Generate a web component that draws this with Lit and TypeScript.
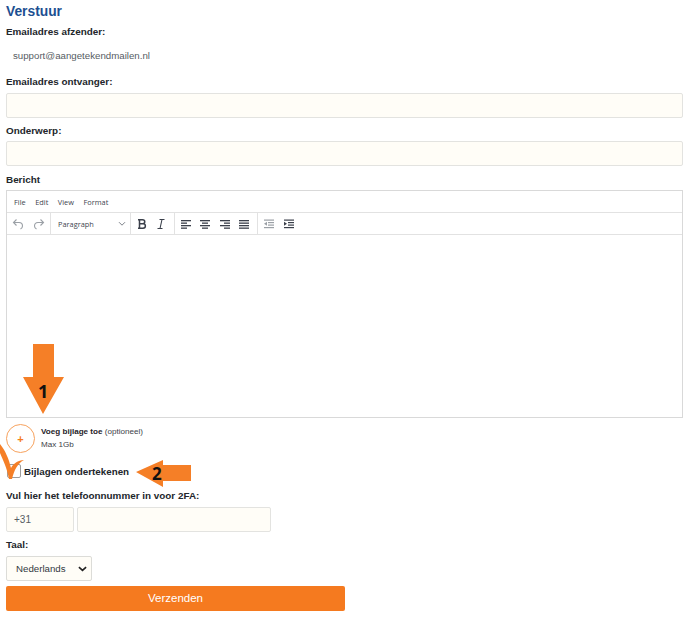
import { LitElement, html, css, svg } from "lit";
import { customElement } from "lit/decorators.js";

const lines = (rows: [number, number][], color: string) =>
  svg`${rows.map(([x, w], i) => svg`<rect x=${x} y=${2 + i * 2.5} width=${w} height="1.3" fill=${color}></rect>`)}`;

const alignIcon = (rows: [number, number][]) =>
  html`<svg class="ic" viewBox="0 0 12 12" width="12" height="12">${lines(rows, "#3a3f4a")}</svg>`;

const indentIcon = (indent: boolean, color: string) => html`<svg class="ic" viewBox="0 0 12 12" width="12" height="12">
  <rect x="1" y="1.5" width="10" height="1.2" fill=${color}></rect>
  <rect x="5" y="4" width="6" height="1.2" fill=${color}></rect>
  <rect x="5" y="6.5" width="6" height="1.2" fill=${color}></rect>
  <rect x="1" y="9" width="10" height="1.2" fill=${color}></rect>
  <path d=${indent ? "M1 3.8 L4 5.8 L1 7.8 Z" : "M4 3.8 L1 5.8 L4 7.8 Z"} fill=${color}></path>
</svg>`;

@customElement("app-root")
export class AppRoot extends LitElement {
  static styles = css`
    :host {
      display: block;
      position: relative;
      width: 688px;
      height: 620px;
      background: #fff;
      overflow: hidden;
      font-family: "Liberation Sans", Arial, sans-serif;
      color: #212529;
    }
    .page {
      display: flex;
      flex-direction: column;
      padding: 4px 5px 0 6px;
    }
    h1 {
      margin: 0;
      font-size: 13.8px;
      line-height: 16px;
      font-weight: 700;
      color: #1d4f91;
    }
    label {
      display: block;
      font-size: 9.9px;
      line-height: 12px;
      font-weight: 700;
      color: #22262b;
    }
    .l1 { margin-top: 6px; }
    .static {
      font-size: 9.7px;
      line-height: 12px;
      color: #565c63;
      padding-left: 7px;
      margin-top: 12px;
    }
    .l2 { margin-top: 14px; }
    .field {
      height: 25px;
      box-sizing: border-box;
      background: #fffdf7;
      border: 1px solid #e3e3e0;
      border-radius: 2px;
    }
    .f1 { margin-top: 5px; }
    .l3 { margin-top: 7px; }
    .f2 { margin-top: 4px; }
    .l4 { margin-top: 8px; }
    .editor {
      margin-top: 4px;
      height: 228px;
      box-sizing: border-box;
      border: 1px solid #d9d9d9;
      display: flex;
      flex-direction: column;
    }
    .menu {
      height: 21px;
      flex: none;
      display: flex;
      align-items: center;
      gap: 9.5px;
      padding-left: 7px;
      font-family: "Open Sans", "Liberation Sans", sans-serif;
      font-size: 7.4px;
      color: #3f4650;
      border-bottom: 1px solid #e2e2e2;
    }
    .tools {
      height: 21px;
      flex: none;
      display: flex;
      border-bottom: 1px solid #e2e2e2;
    }
    .group {
      display: flex;
      align-items: center;
      box-sizing: border-box;
      border-right: 1px solid #e2e2e2;
      height: 100%;
    }
    .g1 { width: 44px; padding-left: 5px; gap: 9px; }
    .g2 {
      width: 80px;
      padding-left: 7px;
      font-family: "Open Sans", "Liberation Sans", sans-serif;
      font-size: 7.4px;
      color: #3f4650;
      justify-content: space-between;
      padding-right: 4px;
    }
    .g3 { width: 44px; padding-left: 6px; gap: 9px; }
    .g4 { width: 83px; padding-left: 5px; gap: 7.3px; }
    .g5 { border: 0; padding-left: 5px; gap: 8px; }
    .ic { display: block; flex: none; }
    .body { flex: 1; }
    .attach {
      margin-top: 6px;
      display: flex;
      gap: 6px;
      align-items: center;
    }
    .circle {
      width: 29px;
      height: 29px;
      box-sizing: border-box;
      border: 1px solid #f7a25e;
      border-radius: 50%;
      display: flex;
      align-items: center;
      justify-content: center;
      color: #f57c20;
      font-size: 11px;
      font-weight: 700;
    }
    .a1 { font-size: 8.1px; line-height: 12px; color: #3d4249; }
    .a1 b { color: #1f2328; }
    .a2 { font-size: 8.1px; line-height: 12px; margin-top: 1px; color: #3d4249; }
    .sign {
      margin-top: 11px;
      margin-left: 1px;
      display: flex;
      align-items: center;
      gap: 3px;
      font-size: 9.8px;
      font-weight: 700;
      color: #22262b;
    }
    .box {
      width: 14px;
      height: 14px;
      box-sizing: border-box;
      border: 1px solid #9d9d9d;
      border-radius: 2px;
      background: #fff;
    }
    .l5 { margin-top: 12px; }
    .phone {
      margin-top: 5px;
      display: flex;
      gap: 3px;
    }
    .prefix {
      width: 68px;
      height: 25px;
      box-sizing: border-box;
      background: #fffdf7;
      border: 1px solid #e3e3e0;
      border-radius: 2px;
      font-size: 10px;
      line-height: 23px;
      padding-left: 7px;
      color: #565c63;
    }
    .num {
      width: 194px;
      height: 25px;
      box-sizing: border-box;
      background: #fffdf7;
      border: 1px solid #e3e3e0;
      border-radius: 2px;
    }
    .l6 { margin-top: 7px; }
    .select {
      margin-top: 5px;
      width: 86px;
      height: 25px;
      box-sizing: border-box;
      background: #fffdf7;
      border: 1px solid #dcdcd8;
      border-radius: 2px;
      display: flex;
      align-items: center;
      justify-content: space-between;
      padding: 0 4px 0 9px;
      font-size: 9.7px;
      color: #33383e;
    }
    .submit {
      margin-top: 5px;
      width: 339px;
      height: 25px;
      background: #f57a1f;
      border-radius: 2px;
      color: #fff;
      font-size: 11.5px;
      line-height: 24px;
      text-align: center;
    }
    .overlay {
      position: absolute;
      left: 0;
      top: 0;
      pointer-events: none;
    }
    .num-tag {
      position: absolute;
      font-family: "Open Sans", "Liberation Sans", sans-serif;
      font-weight: 700;
      color: #111;
      font-size: 18px;
      line-height: 20px;
    }
    .n1 { left: 38px; top: 381px; }
    .n2 { left: 152px; top: 464px; font-size: 17px; }
  `;

  render() {
    return html`
      <div class="page">
        <h1>Verstuur</h1>
        <label class="l1">Emailadres afzender:</label>
        <div class="static">support@aangetekendmailen.nl</div>
        <label class="l2">Emailadres ontvanger:</label>
        <div class="field f1"></div>
        <label class="l3">Onderwerp:</label>
        <div class="field f2"></div>
        <label class="l4">Bericht</label>
        <div class="editor">
          <div class="menu"><span>File</span><span>Edit</span><span>View</span><span>Format</span></div>
          <div class="tools">
            <div class="group g1">
              <svg class="ic" viewBox="0 0 12 12" width="12" height="12" fill="none" stroke="#9ba0a6" stroke-width="1.1">
                <path d="M4.5 1.5 L1.5 4.5 L4.5 7.5 M1.5 4.5 H7 C9.5 4.5 10.5 6.5 10.5 8 C10.5 9.5 9.5 10.5 8.5 11"></path>
              </svg>
              <svg class="ic" viewBox="0 0 12 12" width="12" height="12" fill="none" stroke="#9ba0a6" stroke-width="1.1">
                <path d="M7.5 1.5 L10.5 4.5 L7.5 7.5 M10.5 4.5 H5 C2.5 4.5 1.5 6.5 1.5 8 C1.5 9.5 2.5 10.5 3.5 11"></path>
              </svg>
            </div>
            <div class="group g2">
              <span>Paragraph</span>
              <svg class="ic" viewBox="0 0 8 6" width="8" height="6" fill="none" stroke="#7d8289" stroke-width="1">
                <path d="M1 1.2 L4 4.2 L7 1.2"></path>
              </svg>
            </div>
            <div class="group g3">
              <svg class="ic" viewBox="0 0 10 12" width="10" height="12" fill="none" stroke="#3a3f4a" stroke-width="1.5">
                <path d="M2.5 1.8 V10.2 M1 1.8 H5.5 C8.5 1.8 8.5 5.8 5.5 5.8 H2.5 M2.5 5.8 H6 C9.2 5.8 9.2 10.2 6 10.2 H1"></path>
              </svg>
              <svg class="ic" viewBox="0 0 10 12" width="10" height="12" fill="none" stroke="#3a3f4a" stroke-width="1.1">
                <path d="M3.5 1.5 H8.5 M1.5 10.5 H6.5 M6 1.5 L4 10.5"></path>
              </svg>
            </div>
            <div class="group g4">
              ${alignIcon([[1, 10], [1, 6], [1, 10], [1, 6]])}
              ${alignIcon([[1, 10], [3, 6], [1, 10], [3, 6]])}
              ${alignIcon([[1, 10], [5, 6], [1, 10], [5, 6]])}
              ${alignIcon([[1, 10], [1, 10], [1, 10], [1, 10]])}
            </div>
            <div class="group g5">
              ${indentIcon(false, "#9ba0a6")}
              ${indentIcon(true, "#3a3f4a")}
            </div>
          </div>
          <div class="body"></div>
        </div>
        <div class="attach">
          <div class="circle">+</div>
          <div>
            <div class="a1"><b>Voeg bijlage toe</b> (optioneel)</div>
            <div class="a2">Max 1Gb</div>
          </div>
        </div>
        <div class="sign"><div class="box"></div><span>Bijlagen ondertekenen</span></div>
        <label class="l5">Vul hier het telefoonnummer in voor 2FA:</label>
        <div class="phone"><div class="prefix">+31</div><div class="num"></div></div>
        <label class="l6">Taal:</label>
        <div class="select">
          <span>Nederlands</span>
          <svg class="ic" viewBox="0 0 10 6" width="9" height="6" fill="none" stroke="#222" stroke-width="1.8">
            <path d="M1 1 L5 4.6 L9 1"></path>
          </svg>
        </div>
        <div class="submit">Verzenden</div>
      </div>

      <svg class="overlay" width="688" height="620" viewBox="0 0 688 620">
        <path d="M33 344 H54 V377 H64 L43 414 L23 377 H33 Z" fill="#f57f27"></path>
        <path d="M191 465 V481 H163 V487 L136 472 L163 460 V465 Z" fill="#f57f27"></path>
        <path d="M0 444 C5 450 9 459 11 468 C13 464 18 460 24 460 C18 463 14 470 12 479 L9 479 C7 468 3 460 0 453 Z" fill="#f57f27"></path>
      </svg>
      <div class="num-tag n1">1</div>
      <div class="num-tag n2">2</div>
    `;
  }
}
